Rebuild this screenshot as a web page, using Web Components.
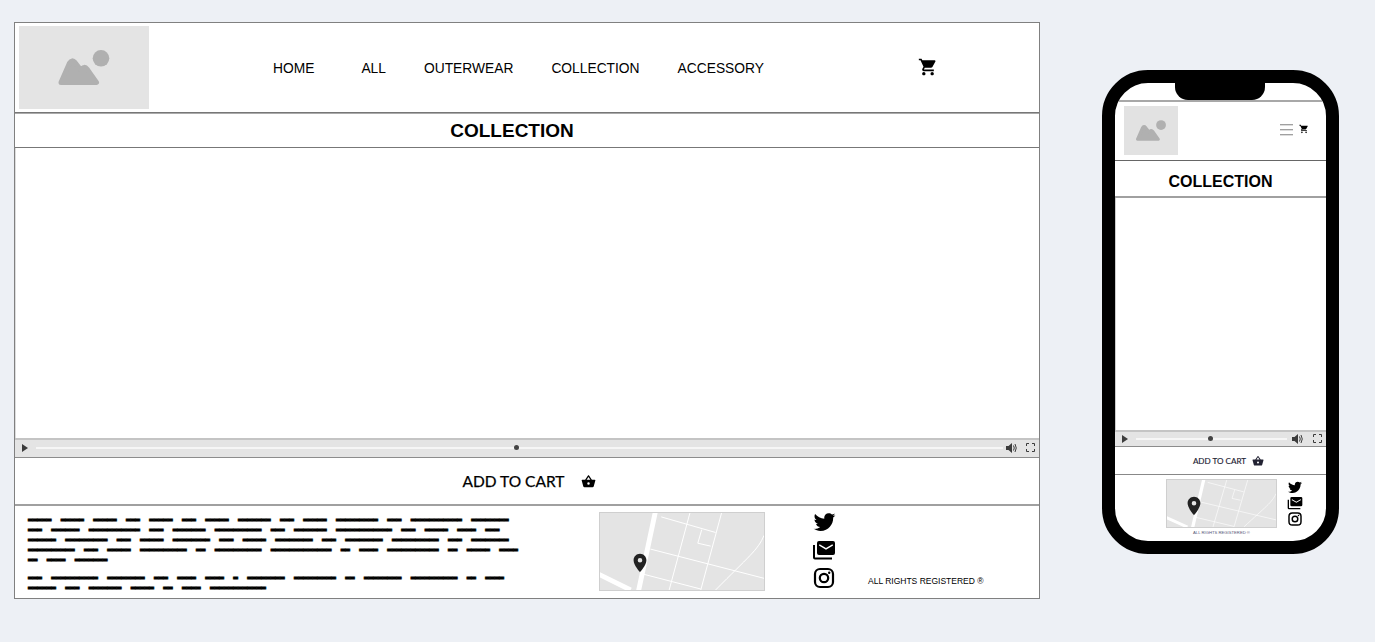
<!DOCTYPE html>
<html>
<head>
<meta charset="utf-8">
<title>Collection</title>
<style>
    html, body { margin: 0; height: 100%; }
    body {
        background: #edf0f5;
        font-family: "Liberation Sans", Arial, sans-serif;
        color: #000;
        display: flex;
        align-items: flex-start;
        padding: 22px 0 0 14px;
        box-sizing: border-box;
        overflow: hidden;
    }
</style>
</head>
<body>
<desktop-view></desktop-view>
<phone-view></phone-view>

<script>
const ICONS = {
    cart: 'M7 18c-1.1 0-1.99.9-1.99 2S5.9 22 7 22s2-.9 2-2-.9-2-2-2zM1 2v2h2l3.6 7.59-1.35 2.45c-.16.28-.25.61-.25.96 0 1.1.9 2 2 2h12v-2H7.42c-.14 0-.25-.11-.25-.25l.03-.12.9-1.63h7.45c.75 0 1.41-.41 1.75-1.03l3.58-6.49c.08-.14.12-.31.12-.48 0-.55-.45-1-1-1H5.21l-.94-2H1zm16 16c-1.1 0-1.99.9-1.99 2s.89 2 1.99 2 2-.9 2-2-.9-2-2-2z',
    basket: 'M5.5,21C4.72,21 4.04,20.55 3.71,19.9L1.1,10.44L1,10A1,1 0 0,1 2,9H6.58L11.18,2.43C11.36,2.17 11.66,2 12,2C12.34,2 12.65,2.17 12.83,2.44L17.42,9H22A1,1 0 0,1 23,10L22.96,10.29L20.29,19.9C19.96,20.55 19.28,21 18.5,21H5.5M12,4.74L9,9H15L12,4.74M12,13A2,2 0 0,0 10,15A2,2 0 0,0 12,17A2,2 0 0,0 14,15A2,2 0 0,0 12,13Z',
    twitter: 'M22.46,6C21.69,6.35 20.86,6.58 20,6.69C20.88,6.16 21.56,5.32 21.88,4.31C21.05,4.81 20.13,5.16 19.16,5.36C18.37,4.5 17.26,4 16,4C13.65,4 11.73,5.92 11.73,8.29C11.73,8.63 11.77,8.96 11.84,9.27C8.28,9.09 5.11,7.38 3,4.79C2.63,5.42 2.42,6.16 2.42,6.94C2.42,8.43 3.17,9.75 4.33,10.5C3.62,10.5 2.96,10.3 2.38,10C2.38,10 2.38,10 2.38,10.03C2.38,12.11 3.86,13.85 5.82,14.24C5.46,14.34 5.08,14.39 4.69,14.39C4.42,14.39 4.15,14.36 3.89,14.31C4.43,16 6,17.26 7.89,17.29C6.43,18.45 4.58,19.13 2.56,19.13C2.22,19.13 1.88,19.11 1.54,19.07C3.44,20.29 5.7,21 8.12,21C16,21 20.33,14.46 20.33,8.79C20.33,8.6 20.33,8.42 20.32,8.23C21.16,7.63 21.88,6.87 22.46,6Z',
    mail: 'M7,3H21A2,2 0 0,1 23,5V15A2,2 0 0,1 21,17H7A2,2 0 0,1 5,15V5A2,2 0 0,1 7,3M14,10L7.6,6.2L6.9,7.4L14,11.8L21.1,7.4L20.4,6.2L14,10M1,7H3V19.5H20V21.5H3A2,2 0 0,1 1,19.5V7Z',
    pin: 'M12 2C8.13 2 5 5.13 5 9c0 5.25 7 13 7 13s7-7.75 7-13c0-3.87-3.13-7-7-7zm0 9.5a2.5 2.5 0 110-5 2.5 2.5 0 010 5z'
};

class WireIcon extends HTMLElement {
    constructor() {
        super();
        const size = this.getAttribute('size') || 24;
        const name = this.getAttribute('name');
        const body = name === 'instagram'
            ? `<rect x="3" y="3" width="18" height="18" rx="5" fill="none" stroke="currentColor" stroke-width="2.2"/>
               <circle cx="12" cy="12" r="4.2" fill="none" stroke="currentColor" stroke-width="2.2"/>
               <circle cx="17.2" cy="6.8" r="1.2" fill="currentColor"/>`
            : `<path fill="currentColor" fill-rule="evenodd" d="${ICONS[name]}"/>`;
        this.attachShadow({ mode: 'open' }).innerHTML = `
            <style>
                :host { display: block; width: ${size}px; height: ${size}px; flex: none; }
                svg { display: block; width: 100%; height: 100%; }
            </style>
            <svg viewBox="0 0 24 24">${body}</svg>`;
    }
}

const logoTemplate = document.createElement('template');
logoTemplate.innerHTML = `
    <style>
        :host { display: block; background: #e4e4e4; flex: none; }
        svg { display: block; width: 100%; height: 100%; }
    </style>
    <svg viewBox="0 0 130 83" preserveAspectRatio="xMidYMid slice">
        <circle cx="82" cy="32.3" r="8.3" fill="#b0b0b0"/>
        <path d="M42 56.5 L50.5 37 Q53 33 56 36.5 L61.5 43.5 L65 41.5 Q66.5 41 68 43 L77.5 56.5 Z" fill="#b0b0b0" stroke="#b0b0b0" stroke-width="5" stroke-linejoin="round"/>
    </svg>`;

class WireLogo extends HTMLElement {
    constructor() {
        super();
        this.attachShadow({ mode: 'open' }).appendChild(logoTemplate.content.cloneNode(true));
    }
}

const mapTemplate = document.createElement('template');
mapTemplate.innerHTML = `
    <style>
        :host { display: block; position: relative; box-sizing: border-box; background: #e4e4e4; border: 1px solid #cfcfcf; overflow: hidden; flex: none; }
        svg.roads { display: block; width: 100%; height: 100%; }
        wire-icon { position: absolute; left: 24.6%; top: var(--pin-top, 64.5%); transform: translate(-50%, -50%); color: #222; }
    </style>
    <svg class="roads" viewBox="0 0 166 79" preserveAspectRatio="none" fill="none" stroke="#fff">
        <path d="M56 -1 L39 80 M-1 63 L31 79" stroke-width="5"/>
        <path d="M62 4 L117 20 M91 0 L70 79 M123 0 L102 79 M51 37 L166 67 M41 62 L102 78 M103 17 L99 31 L112 34 M166 23 C160 38 150 45 117 79" stroke-width="1"/>
    </svg>
    <wire-icon name="pin" size="22"></wire-icon>`;

class WireMap extends HTMLElement {
    constructor() {
        super();
        this.attachShadow({ mode: 'open' }).appendChild(mapTemplate.content.cloneNode(true));
    }
}

const barTemplate = document.createElement('template');
barTemplate.innerHTML = `
    <style>
        :host { display: flex; align-items: center; box-sizing: border-box; background: #e4e4e4; border-top: 2px solid #c4c4c4; border-bottom: 1px solid #8c8c8c; color: #3c3c3c; padding-bottom: 2px; }
        .play { width: 0; height: 0; border-left: 6px solid #3c3c3c; border-top: 4px solid transparent; border-bottom: 4px solid transparent; flex: none; }
        .track { flex: 1; height: 2px; background: #f6f6f6; position: relative; }
        .track i { position: absolute; left: 49.65%; top: 50%; width: 5px; height: 5px; margin: -2.5px; border-radius: 50%; background: #444; }
        svg { display: block; flex: none; }
    </style>
    <span class="play"></span>
    <span class="track"><i></i></span>
    <svg class="vol" width="12" height="12" viewBox="0 0 12 12">
        <path d="M0 4H2.5L6 1V11L2.5 8H0Z" fill="#3c3c3c"/>
        <path d="M7.5 3.5Q9 6 7.5 8.5M9 2Q11.5 6 9 10" fill="none" stroke="#3c3c3c"/>
    </svg>
    <svg class="full" width="9" height="9" viewBox="0 0 9 9" fill="none" stroke="#3c3c3c">
        <path d="M.5 3V.5H3M6 .5H8.5V3M8.5 6V8.5H6M3 8.5H.5V6"/>
    </svg>`;

class VideoBar extends HTMLElement {
    constructor() {
        super();
        this.attachShadow({ mode: 'open' }).appendChild(barTemplate.content.cloneNode(true));
        const root = this.shadowRoot;
        const phone = this.hasAttribute('compact');
        root.querySelector('.play').style.margin = '0 8px 0 7px';
        root.querySelector('.vol').style.margin = phone ? '0 9px 0 5px' : '0 8px 0 3px';
        root.querySelector('.full').style.marginRight = '4px';
    }
}

const LINES = [
    [[5,5,5,3,5,3,5,7,3,5,9,3,11,8],
     [3,6,11,3,7,10,3,7,12,3,5,4,3],
     [6,9,3,5,8,3,5,8,3,8,10,3,8],
     [10,3,5,10,2,10,13,2,4,11,2,5,4],
     [2,4,7]],
    [[3,10,8,3,4,4,1,8,9,2,8,10,2,4],
     [6,3,7,5,2,4,12]]
];

// the copy is blacked out in the design, one bar per letter
class BlockedText extends HTMLElement {
    constructor() {
        super();
        this.attachShadow({ mode: 'open' }).innerHTML = `
            <style>
                :host { display: block; font: 7.76px/10px "DejaVu Sans Mono", monospace; word-spacing: 4.67px; color: #000; -webkit-text-stroke: .6px #000; }
                p { margin: 0 0 8px; white-space: pre; }
            </style>
            ${LINES.map(para => `<p>${para.map(words => words.map(n => '▬'.repeat(n)).join(' ')).join('\n')}</p>`).join('')}`;
    }
}

const desktopTemplate = document.createElement('template');
desktopTemplate.innerHTML = `
    <style>
        :host { display: block; box-sizing: border-box; width: 1026px; height: 577px; background: #fff; border: 1px solid #808080; flex: none; }
        header { height: 90px; display: flex; align-items: center; box-sizing: border-box; border-bottom: 1px solid #777; padding-left: 4px; }
        wire-logo { width: 130px; height: 83px; margin-top: -1px; }
        nav { display: flex; gap: 38px; margin-left: 124px; font-size: 13.8px; padding-top: 2px; }
        nav a:first-child { margin-right: 9px; }
        header wire-icon { margin-left: auto; margin-right: 101px; margin-top: -2px; }
        h1 { margin: 0; height: 35px; box-sizing: border-box; border-bottom: 1px solid #777; border-top: 1px solid #aaa; font-size: 19px; line-height: 34px; text-align: center; padding-right: 30px; }
        .video { height: 290px; border-left: 1px solid #ddd; }
        video-bar { height: 20px; }
        .buy { height: 48px; box-sizing: border-box; display: flex; align-items: center; justify-content: center; gap: 17px; border-bottom: 2px solid #a0a0a0; font: 15.5px Lato, sans-serif; -webkit-text-stroke: .25px #000; padding-left: 5px; }
        footer { display: flex; height: 91px; }
        blocked-text { margin: 9px 0 0 13px; width: 571px; flex: none; }
        wire-map { width: 166px; height: 79px; margin-top: 6px; }
        .social { display: flex; flex-direction: column; align-items: flex-start; margin-left: 47px; margin-top: 3px; gap: 4px; }
        small { font-size: 8.5px; align-self: flex-end; margin: 0 0 11px 31px; }
    </style>
    <header>
        <wire-logo></wire-logo>
        <nav><a>HOME</a><a>ALL</a><a>OUTERWEAR</a><a>COLLECTION</a><a>ACCESSORY</a></nav>
        <wire-icon name="cart" size="20"></wire-icon>
    </header>
    <h1>COLLECTION</h1>
    <div class="video"></div>
    <video-bar></video-bar>
    <div class="buy"><span>ADD TO CART</span><wire-icon name="basket" size="15"></wire-icon></div>
    <footer>
        <blocked-text></blocked-text>
        <wire-map></wire-map>
        <div class="social">
            <wire-icon name="twitter" size="25"></wire-icon>
            <wire-icon name="mail" size="24"></wire-icon>
            <wire-icon name="instagram" size="24"></wire-icon>
        </div>
        <small>ALL RIGHTS REGISTERED ®</small>
    </footer>`;

class DesktopView extends HTMLElement {
    constructor() {
        super();
        this.attachShadow({ mode: 'open' }).appendChild(desktopTemplate.content.cloneNode(true));
    }
}

const phoneTemplate = document.createElement('template');
phoneTemplate.innerHTML = `
    <style>
        :host { display: block; position: relative; box-sizing: border-box; width: 237px; height: 484px; margin: 48px 0 0 62px; border: 13.5px solid #000; border-radius: 46px; background: #fff; overflow: hidden; flex: none; }
        .notch { position: absolute; left: 60px; top: -1px; width: 90px; height: 18px; background: #000; border-radius: 0 0 13px 13px; }
        .screen { margin-top: 17px; border-top: 2px solid #a8a8a8; }
        header { height: 59px; box-sizing: border-box; display: flex; align-items: center; border-bottom: 1px solid #666; padding-left: 9px; }
        wire-logo { width: 54px; height: 49px; background: #e2e2e2; margin-top: -2px; }
        .burger { width: 13px; height: 11px; margin-left: auto; margin-top: -4px; display: flex; flex-direction: column; justify-content: space-between; }
        .burger i { height: 1px; background: #a0a0a0; box-shadow: 0 1px 0 #ddd; }
        header wire-icon { margin: -4px 17px 0 6px; }
        h1 { margin: 0; height: 37px; box-sizing: border-box; border-bottom: 2px solid #a0a0a0; font-size: 16px; line-height: 36px; padding-top: 3px; text-align: center; }
        .video { height: 232px; border-left: 1px solid #ccc; }
        video-bar { height: 17px; padding-bottom: 1px; }
        .buy { height: 28px; box-sizing: border-box; display: flex; align-items: center; justify-content: center; gap: 6px; border-bottom: 1px solid #888; font: 8.1px Lato, sans-serif; -webkit-text-stroke: .15px #223; color: #223; padding-left: 16px; }
        footer { display: grid; grid-template-columns: 111px auto; justify-content: start; column-gap: 10px; padding: 4px 0 0 51px; }
        wire-map { width: 111px; height: 49px; --pin-top: 56%; }
        .social { display: flex; flex-direction: column; gap: 0; }
        small { grid-column: 1; text-align: center; font-size: 4.2px; color: #557; margin-top: 2px; }
    </style>
    <span class="notch"></span>
    <div class="screen">
        <header>
            <wire-logo></wire-logo>
            <span class="burger"><i></i><i></i><i></i></span>
            <wire-icon name="cart" size="10"></wire-icon>
        </header>
        <h1>COLLECTION</h1>
        <div class="video"></div>
        <video-bar compact></video-bar>
        <div class="buy"><span>ADD TO CART</span><wire-icon name="basket" size="12"></wire-icon></div>
        <footer>
            <wire-map></wire-map>
            <div class="social">
                <wire-icon name="twitter" size="16"></wire-icon>
                <wire-icon name="mail" size="16"></wire-icon>
                <wire-icon name="instagram" size="16"></wire-icon>
            </div>
            <small>ALL RIGHTS REGISTERED ®</small>
        </footer>
    </div>`;

class PhoneView extends HTMLElement {
    constructor() {
        super();
        this.attachShadow({ mode: 'open' }).appendChild(phoneTemplate.content.cloneNode(true));
    }
}

window.customElements.define('wire-icon', WireIcon);
window.customElements.define('wire-logo', WireLogo);
window.customElements.define('wire-map', WireMap);
window.customElements.define('video-bar', VideoBar);
window.customElements.define('blocked-text', BlockedText);
window.customElements.define('desktop-view', DesktopView);
window.customElements.define('phone-view', PhoneView);
</script>
</body>
</html>
